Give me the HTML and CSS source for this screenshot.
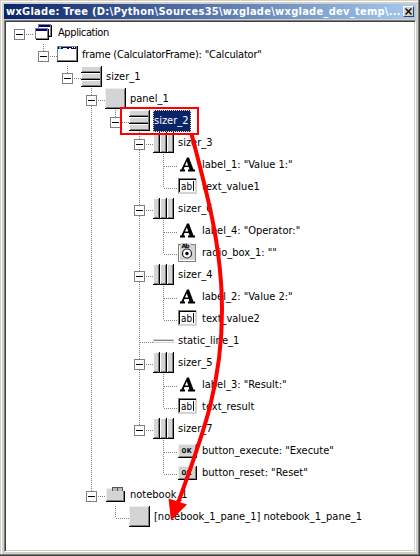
FILE: index.html
```
<!DOCTYPE html>
<html lang="en">
<head>
<meta charset="utf-8">
<title>wxGlade: Tree</title>
<link rel="stylesheet" href="styles.css">
</head>
<body>
<main class="window">
  <header class="titlebar">
    <h1 class="title">wxGlade: Tree (D:\Python\Sources35\wxglade\wxglade_dev_temp\...</h1>
    <button class="close" aria-label="Close"><svg width="7" height="7" viewBox="0 0 7 7"><path d="M.5 0.500l6 6M6.500 .5l-6 6" stroke="#000" stroke-width="1.300"/></svg></button>
  </header>
  <section class="client">
    <ul class="tree">
      <li><div class="row open"><svg class="icon"><use href="#app"/></svg><span class="name tighter">Application</span></div>
      <ul><li><div class="row open"><svg class="icon"><use href="#frame"/></svg><span class="name tight">frame (CalculatorFrame): "Calculator"</span></div>
      <ul><li><div class="row open"><svg class="icon"><use href="#vsizer"/></svg><span class="name">sizer_1</span></div>
      <ul>
        <li><div class="row open"><svg class="icon"><use href="#panel"/></svg><span class="name">panel_1</span></div>
        <ul><li><div class="row open"><svg class="icon"><use href="#vsizer"/></svg><span class="name selected">sizer_2</span></div>
        <ul>
          <li><div class="row open"><svg class="icon"><use href="#hsizer"/></svg><span class="name">sizer_3</span></div>
            <ul>
              <li><div class="row"><svg class="icon"><use href="#label"/></svg><span class="name">label_1: "Value 1:"</span></div></li>
              <li><div class="row"><svg class="icon"><use href="#text"/><text class="icon-ab" x="4" y="14" textLength="11" lengthAdjust="spacingAndGlyphs">ab</text></svg><span class="name">text_value1</span></div></li>
            </ul></li>
          <li><div class="row open"><svg class="icon"><use href="#hsizer"/></svg><span class="name">sizer_6</span></div>
            <ul>
              <li><div class="row"><svg class="icon"><use href="#label"/></svg><span class="name">label_4: "Operator:"</span></div></li>
              <li><div class="row"><svg class="icon"><use href="#radio"/><text class="icon-rb" x="4.500" y="5.500" textLength="8">Ab</text></svg><span class="name">radio_box_1: ""</span></div></li>
            </ul></li>
          <li><div class="row open"><svg class="icon"><use href="#hsizer"/></svg><span class="name">sizer_4</span></div>
            <ul>
              <li><div class="row"><svg class="icon"><use href="#label"/></svg><span class="name">label_2: "Value 2:"</span></div></li>
              <li><div class="row"><svg class="icon"><use href="#text"/><text class="icon-ab" x="4" y="14" textLength="11" lengthAdjust="spacingAndGlyphs">ab</text></svg><span class="name">text_value2</span></div></li>
            </ul></li>
          <li><div class="row"><svg class="icon"><use href="#line"/></svg><span class="name">static_line_1</span></div></li>
          <li><div class="row open"><svg class="icon"><use href="#hsizer"/></svg><span class="name">sizer_5</span></div>
            <ul>
              <li><div class="row"><svg class="icon"><use href="#label"/></svg><span class="name">label_3: "Result:"</span></div></li>
              <li><div class="row"><svg class="icon"><use href="#text"/><text class="icon-ab" x="4" y="14" textLength="11" lengthAdjust="spacingAndGlyphs">ab</text></svg><span class="name">text_result</span></div></li>
            </ul></li>
          <li><div class="row open"><svg class="icon"><use href="#hsizer"/></svg><span class="name">sizer_7</span></div>
            <ul>
              <li><div class="row"><svg class="icon"><use href="#button"/><text class="icon-ok" x="4.500" y="13" textLength="10">OK</text></svg><span class="name">button_execute: "Execute"</span></div></li>
              <li><div class="row"><svg class="icon"><use href="#button"/><text class="icon-ok" x="4.500" y="13" textLength="10">OK</text></svg><span class="name">button_reset: "Reset"</span></div></li>
            </ul></li>
        </ul></li></ul></li>
        <li><div class="row open"><svg class="icon"><use href="#notebook"/></svg><span class="name">notebook_1</span></div>
          <ul><li><div class="row"><svg class="icon"><use href="#panel"/></svg><span class="name">[notebook_1_pane_1] notebook_1_pane_1</span></div></li></ul></li>
      </ul></li></ul></li></ul></li>
    </ul>
  </section>
  <svg class="annotation" width="420" height="556" viewBox="0 0 420 556">
    <rect x="121" y="108" width="77" height="26" fill="none" stroke="#f00" stroke-width="2"/>
    <path d="M191.500 134C206 190 222 245 222 310C222 385 203 434 178 503" fill="none" stroke="#f00" stroke-width="4"/>
    <path d="M168.500 498.500L187 504.500L171 520.500z" fill="#f00"/>
  </svg>
</main>
<svg class="defs" width="0" height="0" aria-hidden="true" shape-rendering="crispEdges">
  <symbol id="app" viewBox="0 0 22 22">
    <path fill="#000" d="M6 3h13v12H6z"/><path fill="#808080" d="M5 2h13v12H5z"/><path fill="#fff" d="M6 3h11v10H6z"/><path fill="#00007c" d="M6 3h11v2H6z"/>
    <path fill="#000" d="M3 7h13v11H3z"/><path fill="#808080" d="M2 6h13v11H2z"/><path fill="#fff" d="M3 7h11v9H3z"/><path fill="#00007c" d="M3 7h11v2H3z"/>
  </symbol>
  <symbol id="frame" viewBox="0 0 22 22">
    <path fill="#000" d="M0 2h21v16H0z"/><path fill="#808080" d="M0 2h20v15H0z"/><path fill="#fff" d="M1 3h18v13H1z"/><path fill="#00007c" d="M1 3h18v2H1z"/>
    <path fill="#0cc" d="M2 3h2v2H2z"/><path fill="#ee0" d="M3 3h1v1H3z"/><path fill="#fff" d="M6 4h4v1H6zM12 4h2v1h-2zM15 3h1v1h-1zM17 3h1v1h-1z"/>
  </symbol>
  <symbol id="vsizer" viewBox="0 0 22 22">
    <path fill="#000" d="M0 0h21v21H0z"/>
    <path fill="#fff" d="M0 0h20v6H0zM0 7h20v6H0zM0 14h20v6H0z"/>
    <path fill="#d4d4d4" d="M1 1h19v5H1zM1 8h19v5H1zM1 15h19v5H1z"/>
    <path fill="#808080" d="M1 5h19v1H1zM1 12h19v1H1zM1 19h19v1H1zM19 1h1v18h-1z"/>
  </symbol>
  <symbol id="hsizer" viewBox="0 0 22 22">
    <path fill="#000" d="M0 0h21v21H0z"/>
    <path fill="#fff" d="M0 0h6v20H0zM7 0h6v20H7zM14 0h6v20h-6z"/>
    <path fill="#d4d4d4" d="M1 1h5v19H1zM8 1h5v19H8zM15 1h5v19h-5z"/>
    <path fill="#808080" d="M5 1h1v19H5zM12 1h1v19h-1zM19 1h1v19h-1zM1 19h5v1H1zM8 19h5v1H8zM15 19h5v1h-5z"/>
  </symbol>
  <symbol id="panel" viewBox="0 0 22 22">
    <path fill="#000" d="M0 0h21v21H0z"/><path fill="#eee" d="M0 0h20v20H0z"/><path fill="#808080" d="M1 1h19v19H1z"/><path fill="#d4d4d4" d="M1 1h18v18H1z"/>
  </symbol>
  <symbol id="label" viewBox="0 0 22 22">
    <path fill="#000" shape-rendering="auto" d="M10 3.500h2l4.500 12H18v2h-7v-2h1.500l-.8-2.500H7.500l-.9 2.500H8v2H3v-2h1.300zM9.700 7.500L8 11.500h3.300z"/>
  </symbol>
  <symbol id="text" viewBox="0 0 22 22">
    <path fill="#d4d4d4" d="M1 2h19v16H1z"/><path fill="#808080" d="M1 2h18v1H1zM1 2h1v15H1z"/><path fill="#000" d="M2 3h17v1H2zM2 3h1v13H2z"/><path fill="#fff" d="M3 4h15v12H3z"/><path fill="#000" d="M16 5h1v10h-1z"/>
  </symbol>
  <symbol id="radio" viewBox="0 0 22 22">
    <path fill="#808080" d="M1 2h18v18H1z"/><path fill="#d4d4d4" d="M2 3h16v16H2z"/><path fill="#fff" d="M2 4h1v14H2zM2 18h16v1H2z"/><path fill="#d4d4d4" d="M4 1h10v5H4z"/>
    <g shape-rendering="auto"><circle cx="10" cy="11.500" r="4.500" fill="#fff" stroke="#222" stroke-width="1.200"/><circle cx="10" cy="11.500" r="1.700"/></g>
  </symbol>
  <symbol id="line" viewBox="0 0 22 22"><path fill="#d4d4d4" d="M0 9h21v4H0z"/><path fill="#808080" d="M1 10h19v1H1z"/><path fill="#fff" d="M1 11h19v1H1z"/></symbol>
  <symbol id="button" viewBox="0 0 22 22">
    <path fill="#000" d="M1 4h19v14H1z"/><path fill="#eee" d="M1 4h18v13H1z"/><path fill="#808080" d="M2 5h17v12H2z"/><path fill="#d4d4d4" d="M2 5h16v11H2z"/>
  </symbol>
  <symbol id="notebook" viewBox="0 0 22 22">
    <path fill="#000" d="M1 7h19v11H1z"/><path fill="#eee" d="M1 4h6v3h12v10H1z"/><path fill="#808080" d="M2 7h17v10H2z"/><path fill="#d4d4d4" d="M2 5h5v2h11v9H2z"/>
    <path fill="#bbb" d="M7 3h11v4H7z"/><path fill="#555" d="M7 3h11v1H7zM7 3h1v4H7zM12 3h1v4h-1zM17 3h1v4h-1z"/>
  </symbol>
</svg>
</body>
</html>
```
FILE: styles.css
```
*, *::before { box-sizing: border-box; }
body { margin: 0; background: #d4d0c8; font: 11px/22px "DejaVu Sans Condensed", "DejaVu Sans", sans-serif; font-stretch: condensed; color: #000; overflow: hidden; }
.defs { position: absolute; left: 0; top: 0; }
.window {
  position: relative; display: flex; flex-direction: column;
  width: 420px; height: 556px; padding: 4px;
  box-shadow: inset -1px -1px #404040, inset -2px -2px #808080, inset 1px 1px #d4d0c8, inset 2px 2px #fff;
}
.titlebar {
  display: flex; align-items: center; height: 15px; flex: none; padding: 0 2px;
  background: linear-gradient(90deg, #0a246a, #a6caf0);
}
.title { flex: 1; margin: 0; font-size: 11px; line-height: 15px; letter-spacing: 0.27px; font-weight: bold; color: #fff; white-space: nowrap; }
.close {
  display: grid; place-items: center; width: 11px; height: 11px; padding: 0; border: 1px solid;
  border-color: #fff #404040 #404040 #fff; background: #d4d0c8;
}
.client {
  flex: 1; min-height: 0; margin-top: 1px; background: #fff; border: 1px solid;
  border-color: #808080 #fff #fff #808080; box-shadow: inset 1px 1px #404040, inset -1px -1px #d4d0c8;
}
.tree, .tree ul { list-style: none; margin: 0; padding: 0; }
.tree { padding: 1px 0 0 9px; }
.tree ul { padding-left: 24px; }
.tree li {
  background: repeating-linear-gradient(#808080 0 1px, transparent 1px 2px) 5px 0 / 1px 100% no-repeat;
}
.tree li:last-child { background-size: 1px 12px; }
.tree > li:last-child { background: none; }
.row {
  display: flex; align-items: center; height: 22px; padding-left: 19px;
  background: repeating-linear-gradient(90deg, #808080 0 1px, transparent 1px 2px) 6px 12px / 13px 1px no-repeat;
}
.row.open::before {
  content: ""; width: 11px; height: 11px; margin: 3px 8px 0 -19px; flex: none;
  border: 1px solid #808080;
  background: linear-gradient(#000, #000) center / 7px 1px no-repeat #fff;
}
.icon { width: 22px; height: 22px; flex: none; }
.name { margin-left: 3px; line-height: 14px; white-space: nowrap; }
.tight { letter-spacing: -0.2px; }
.tighter { letter-spacing: -0.4px; }
.selected { margin-left: 2px; padding: 0 2px 0 1px; line-height: 22px; background: #0a246a; color: #fff; outline: 1px dotted #f5db95; outline-offset: -1px; }
.annotation { position: absolute; left: 0; top: 0; pointer-events: none; }
.icon-ab { font: 10px "DejaVu Sans Condensed", sans-serif; }
.icon-rb { font: bold 6px "DejaVu Sans", sans-serif; }
.icon-ok { font: bold 8px "Liberation Mono", monospace; }
```
